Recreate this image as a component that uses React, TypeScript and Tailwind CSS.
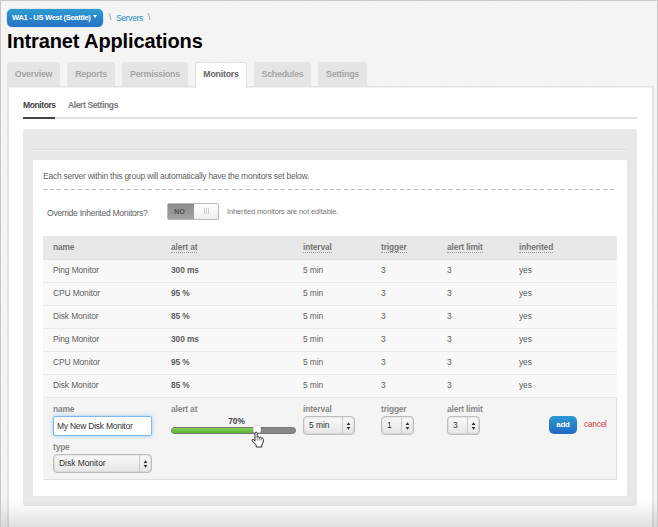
import React from "react";

const tabs = [
  { label: "Overview", box: "w-[53px]" },
  { label: "Reports", box: "w-[48px]" },
  { label: "Permissions", box: "w-[66px]" },
  { label: "Monitors", box: "w-[52px]", active: true },
  { label: "Schedules", box: "w-[57px]" },
  { label: "Settings", box: "w-[49px]" },
];

const rows = [
  ["Ping Monitor", "300 ms"],
  ["CPU Monitor", "95 %"],
  ["Disk Monitor", "85 %"],
  ["Ping Monitor", "300 ms"],
  ["CPU Monitor", "95 %"],
  ["Disk Monitor", "85 %"],
];

const columns = "grid grid-cols-[118px_132px_78px_66px_72px_1fr] items-center pl-[10px]";

function Head({ children }: { children: string }) {
  return (
    <div>
      <span className="inline-block h-[12px] border-b border-dotted border-[#999] leading-[12px]">{children}</span>
    </div>
  );
}

function Label({ children }: { children: string }) {
  return (
    <div className="h-[12px] text-[8.4px] leading-[10px] font-bold tracking-[-0.15px] text-[#888]">{children}</div>
  );
}

function Select({ value, box }: { value: string; box: string }) {
  return (
    <div
      className={`flex h-[19px] ${box} overflow-hidden rounded-[4px] border border-[#bdbdbd] bg-linear-to-b from-[#f9f9f9] to-[#e6e6e6] shadow-[inset_0_0_2px_#bbb]`}
    >
      <div className="flex-1 pl-[5px] text-[8.5px] leading-[16px] tracking-[-0.05px] text-[#333]">{value}</div>
      <div className="flex w-[12px] items-center justify-center border-l border-[#c9c9c9]">
        <svg width="5" height="8" viewBox="0 0 5 8" fill="#333">
          <path d="M2.5 0.3 4.4 3H.6zM2.5 7.7 4.4 5H.6z" />
        </svg>
      </div>
    </div>
  );
}

function Cursor() {
  return (
    <svg className="absolute top-[3px] left-[79px]" width="14" height="17" viewBox="0 0 14 17">
      <path
        d="M4 10V2.2C4 .6 6.2.6 6.2 2.2V6.2C6.8 5.3 8.3 5.6 8.3 6.6 9 5.9 10.3 6.2 10.3 7.2 11.2 6.6 12.3 7 12.3 8.2V11L10.8 14V16H5.2V14L1.4 10C.4 8.7 1.8 7.6 2.8 8.6Z"
        fill="#fff"
        stroke="#333"
        strokeWidth="1"
        strokeLinejoin="round"
      />
      <path d="M6.2 6.2V9.5M8.3 6.8V9.5M10.3 7.4V9.5" stroke="#555" strokeWidth=".7" />
    </svg>
  );
}

export default function App() {
  return (
    <div className="relative h-[527px] w-[658px] overflow-hidden border-t border-r border-l border-[#c8c8c8] bg-[#f6f6f6] font-['Liberation_Sans',Arial,sans-serif] text-[8.2px] text-[#5f5f5f]">
      <svg className="absolute inset-0 opacity-[0.06]" width="658" height="527">
        <filter id="grain">
          <feTurbulence type="fractalNoise" baseFrequency="0.45" numOctaves="2" seed="4" />
          <feColorMatrix type="saturate" values="0" />
        </filter>
        <rect width="658" height="527" filter="url(#grain)" />
      </svg>
      <div className="relative pt-[8px] pr-[3px] pl-[6px]">
        <div className="flex h-[18px] items-center">
          <button className="flex h-[18px] w-[96px] items-center rounded-[5px] bg-linear-to-b from-[#2c9bd1] to-[#2871c5] pl-[5px] text-[7.6px] font-bold tracking-[-0.32px] whitespace-nowrap text-white shadow-[0_0_1px_#2a6fae]">
            WA1 - US West (Seattle)
            <span className="mb-[3px] ml-[2px] border-x-[2.5px] border-t-[3px] border-x-transparent border-t-white" />
          </button>
          <span className="ml-[6px] pt-[1px] text-[#888]">\</span>
          <a className="ml-[5px] pt-[1px] text-[8.3px] tracking-[-0.28px] text-[#1f8dc4]">Servers</a>
          <span className="ml-[5px] pt-[1px] text-[#888]">\</span>
        </div>
        <h1 className="h-[35px] pt-[1px] text-[20px] leading-[26px] font-bold tracking-[-0.12px] whitespace-nowrap text-black">
          Intranet Applications
        </h1>
        <nav className="flex h-[24px] gap-[7px]">
          {tabs.map((t) => (
            <div
              key={t.label}
              className={`flex h-[24px] items-center justify-center rounded-t-[3px] pt-[1px] text-[8.8px] font-bold tracking-[-0.22px] ${t.box} ${
                t.active
                  ? "relative z-10 h-[26px] border-x border-t border-[#e2e2e2] bg-white pb-[2px] text-[#666]"
                  : "bg-[#e5e5e5] text-[#a5a5a5]"
              }`}
            >
              {t.label}
            </div>
          ))}
        </nav>
        <main className="h-[460px] border-2 border-t-[1px] border-[#e4e4e4] bg-white pr-[15px] pl-[14px] shadow-[inset_0_1px_0_#f0f0f0]">
          <div className="flex h-[32px] border-b-2 border-[#dfdfdf] text-[8.6px] leading-[37px] font-bold tracking-[-0.45px] whitespace-nowrap">
            <div className="mr-[13px] h-[32px] w-[32px] border-b-2 border-[#444] text-[#444]">Monitors</div>
            <div className="text-[8.6px] font-bold tracking-[-0.42px] text-[#777]">Alert Settings</div>
          </div>
          <section className="mt-[10px] h-[377px] rounded-[3px] bg-[#e8e8e8] px-[10px] pt-[20px]">
            <div className="h-[2px] border-b border-[#f0f0f0] bg-[#dcdcdc]" />
            <div className="mt-[9px] h-[336px] rounded-[2px] bg-white px-[10px]">
              <p className="h-[29px] pt-[1px] text-[8.5px] leading-[31px] tracking-[-0.25px] whitespace-nowrap">
                Each server within this group will automatically have the monitors set below.
              </p>
              <div className="h-px bg-[repeating-linear-gradient(90deg,#bbb_0_4px,transparent_4px_7px)]" />
              <div className="flex h-[46px] items-center pl-[4px]">
                <span className="w-[120px] pt-[1px] text-[8.6px] tracking-[-0.3px]">Override Inherited Monitors?</span>
                <div className="mb-[4px] flex h-[17px] w-[52px] rounded-[2px] border border-[#bbb] bg-[#999]">
                  <div className="w-[26px] bg-linear-to-b from-[#8c8c8c] to-[#a2a2a2] pl-[6px] text-[7.3px] leading-[15px] font-bold text-[#555]">
                    NO
                  </div>
                  <div className="flex flex-1 items-center justify-center gap-[1px] rounded-[1px] bg-linear-to-b from-white to-[#eee]">
                    <i className="h-[6px] w-px bg-[#ccc]" />
                    <i className="h-[6px] w-px bg-[#ccc]" />
                    <i className="h-[6px] w-px bg-[#ccc]" />
                  </div>
                </div>
                <span className="mb-[2px] ml-[8px] text-[7.5px] tracking-[-0.13px] text-[#777]">
                  Inherited monitors are not editable.
                </span>
              </div>
              <div
                className={`${columns} h-[24px] border-b border-[#e2e2e2] bg-[#e8e8e8] text-[8.4px] font-bold tracking-[-0.14px] text-[#777]`}
              >
                <div>name</div>
                <Head>alert at</Head>
                <Head>interval</Head>
                <Head>trigger</Head>
                <Head>alert limit</Head>
                <Head>inherited</Head>
              </div>
              {rows.map(([name, at], i) => (
                <div
                  key={i}
                  className={`${columns} h-[23px] border-b border-[#e9e9e9] bg-[#f8f8f8] pb-px text-[8.4px] tracking-[-0.09px]`}
                >
                  <div>{name}</div>
                  <div className="font-bold">{at}</div>
                  <div>5 min</div>
                  <div>3</div>
                  <div>3</div>
                  <div>yes</div>
                </div>
              ))}
              <div className="flex h-[82px] border-r border-b border-[#e0e0e0] bg-[#f4f4f4] pt-[6px] pl-[10px]">
                <div className="w-[118px]">
                  <Label>name</Label>
                  <div className="h-[20px] w-[99px] rounded-[2px] border border-[#7fb7e6] bg-white pl-[3px] text-[8.5px] leading-[18px] tracking-[-0.25px] text-[#333] shadow-[0_0_4px_#9bcaf0]">
                    My New Disk Monitor
                  </div>
                  <div className="h-[6px]" />
                  <Label>type</Label>
                  <Select value="Disk Monitor" box="w-[99px]" />
                </div>
                <div className="w-[132px]">
                  <Label>alert at</Label>
                  <div className="h-[12px] w-[131px] text-center text-[8.3px] leading-[11px] font-bold text-[#444]">
                    70%
                  </div>
                  <div className="relative flex h-[7px] w-[125px] -translate-y-px rounded-full border border-[#777] bg-[#888]">
                    <div className="w-[81px] rounded-l-full bg-linear-to-b from-[#84d158] to-[#58b034]" />
                    <div className="-mt-[3px] h-[8px] w-[8px] rounded-[2px] border border-[#ddd] bg-white" />
                    <Cursor />
                  </div>
                </div>
                <div className="w-[78px]">
                  <Label>interval</Label>
                  <Select value="5 min" box="w-[52px]" />
                </div>
                <div className="w-[66px]">
                  <Label>trigger</Label>
                  <Select value="1" box="w-[33px]" />
                </div>
                <div className="w-[102px]">
                  <Label>alert limit</Label>
                  <Select value="3" box="w-[33px]" />
                </div>
                <button className="mt-[12px] h-[18px] w-[28px] rounded-[5px] bg-linear-to-b from-[#2c9bd1] to-[#2368c4] text-[8px] font-bold tracking-[-0.2px] text-white">
                  add
                </button>
                <span className="mt-[12px] ml-[7px] text-[8.4px] leading-[16px] tracking-[-0.25px] text-[#e13a40]">
                  cancel
                </span>
              </div>
            </div>
          </section>
        </main>
      </div>
      <div className="pointer-events-none absolute inset-x-0 bottom-0 h-[27px] bg-linear-to-b from-transparent to-black/12" />
    </div>
  );
}
